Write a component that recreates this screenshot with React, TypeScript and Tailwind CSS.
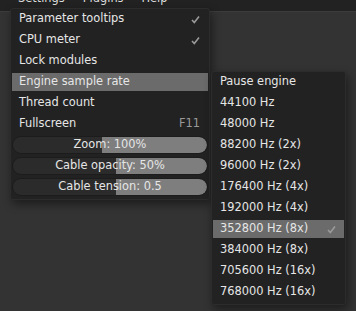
import { ReactNode } from "react";

const font = { fontFamily: '"DejaVu Sans", sans-serif' };

function Check() {
  return (
    <svg width="9" height="9" viewBox="0 0 9 9" className="text-[#9a9a9a]">
      <path d="M1 5 L3.3 7.5 L8 1.5" fill="none" stroke="currentColor" strokeWidth="1.6" />
    </svg>
  );
}

function Item({ label, right, active }: { label: string; right?: ReactNode; active?: boolean }) {
  return (
    <div
      className={`h-[18px] mb-[3px] flex items-center justify-between pl-[7px] pr-[8px] ${
        active ? "bg-[#6b6b6b]" : ""
      }`}
    >
      <span>{label}</span>
      {right && <span className="text-[#9a9a9a]">{right}</span>}
    </div>
  );
}

function Slider({ label, from }: { label: string; from: number }) {
  return (
    <div className="relative h-[18px] mb-[3px] rounded-full bg-[#2b2b2b] border border-[#1c1c1c] overflow-hidden">
      <div className="absolute top-0 bottom-0 right-0 bg-[#7e7e7e] rounded-r-full" style={{ left: from }} />
      <div className="relative h-full flex items-center justify-center">{label}</div>
    </div>
  );
}

const rates = [
  "Pause engine",
  "44100 Hz",
  "48000 Hz",
  "88200 Hz (2x)",
  "96000 Hz (2x)",
  "176400 Hz (4x)",
  "192000 Hz (4x)",
  "352800 Hz (8x)",
  "384000 Hz (8x)",
  "705600 Hz (16x)",
  "768000 Hz (16x)",
];

export default function App() {
  return (
    <div className="relative w-[356px] h-[311px] bg-[#333333] overflow-hidden text-[11.4px] text-[#e6e6e6]" style={font}>
      {/* menu bar */}
      <div className="h-[12px] bg-[#222222] border-b border-[#3c3c3c] overflow-hidden">
        <div className="flex gap-[18px] pl-[18px] -mt-[10px] text-[11.4px] text-[#dcdcdc]">
          <span>Settings</span>
          <span>Plugins</span>
          <span>Help</span>
        </div>
      </div>

      {/* settings menu */}
      <div className="absolute left-[10px] top-[8px] w-[200px] p-[1px] pb-0 bg-[#222222] border border-[#2c2c2c] rounded-[3px] shadow-[2px_4px_10px_rgba(0,0,0,0.45)]">
        <Item label="Parameter tooltips" right={<Check />} />
        <Item label="CPU meter" right={<Check />} />
        <Item label="Lock modules" />
        <Item label="Engine sample rate" active />
        <Item label="Thread count" />
        <Item label="Fullscreen" right="F11" />
        <Slider label="Zoom: 100%" from={89} />
        <Slider label="Cable opacity: 50%" from={103} />
        <Slider label="Cable tension: 0.5" from={103} />
      </div>

      {/* sample rate submenu */}
      <div className="absolute left-[211px] top-[71px] w-[135px] p-[1px] pb-0 bg-[#222222] border border-[#2c2c2c] rounded-[3px] shadow-[2px_4px_10px_rgba(0,0,0,0.45)]">
        {rates.map((r) => (
          <Item key={r} label={r} active={r === "352800 Hz (8x)"} right={r === "352800 Hz (8x)" ? <Check /> : undefined} />
        ))}
      </div>
    </div>
  );
}
